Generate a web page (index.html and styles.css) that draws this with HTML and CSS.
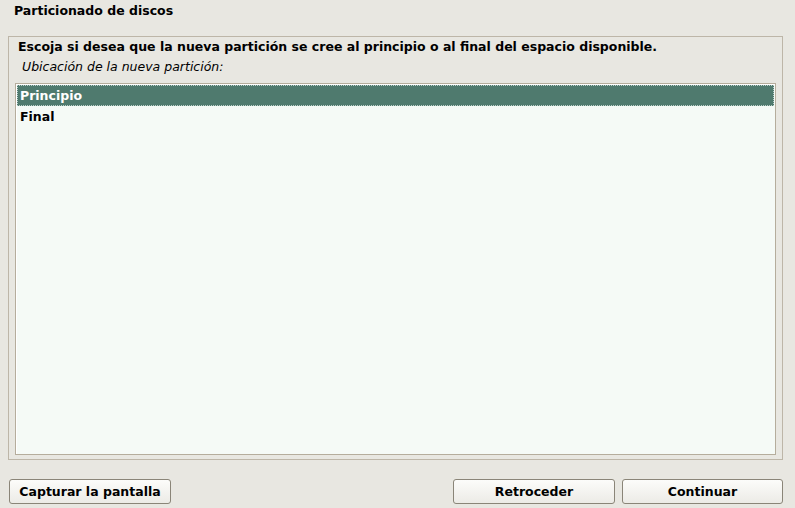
FILE: index.html
```html
<!DOCTYPE html>
<html>
<head>
<meta charset="utf-8">
<link rel="stylesheet" href="styles.css">
</head>
<body>
<div class="app">
  <div class="title">Particionado de discos</div>
  <div class="frame">
    <div class="question">Escoja si desea que la nueva partición se cree al principio o al final del espacio disponible.</div>
    <div class="label">Ubicación de la nueva partición:</div>
    <div class="list">
      <div class="row selected">Principio</div>
      <div class="row">Final</div>
    </div>
  </div>
  <div class="buttons">
    <button class="btn btn-capture">Capturar la pantalla</button>
    <div class="spacer"></div>
    <button class="btn btn-back">Retroceder</button>
    <button class="btn btn-next">Continuar</button>
  </div>
</div>
</body>
</html>
```
FILE: styles.css
```css
html, body {
  margin: 0;
  padding: 0;
  background: #e8e7e1;
}
.app {
  width: 795px;
  height: 508px;
  box-sizing: border-box;
  font-family: "DejaVu Sans", sans-serif;
  font-size: 12.5px;
  color: #000;
  display: flex;
  flex-direction: column;
  padding: 0 12px 0 8px;
}
.title {
  font-weight: bold;
  padding: 3px 0 0 6px;
  height: 36px;
  box-sizing: border-box;
}
.frame {
  border: 1px solid #bdb6a8;
  height: 424px;
  box-sizing: border-box;
  padding: 2px 6px 4px 6px;
  display: flex;
  flex-direction: column;
}
.question {
  font-weight: bold;
  padding: 0 0 0 3px;
  line-height: 16px;
}
.label {
  font-style: italic;
  padding-left: 7px;
  line-height: 18px;
  margin: 3px 0 7px 0;
}
.list {
  flex: 1;
  background: #f5faf6;
  border: 1px solid #b5ad9c;
  box-shadow: inset 1px 1px 0 #fff;
  padding: 1px;
}
.row {
  font-weight: bold;
  height: 21px;
  line-height: 21px;
  padding-left: 3px;
  box-sizing: border-box;
}
.row.selected {
  background: #4f7a6e;
  color: #fff;
  outline: 1px dotted #bcd0ca;
  outline-offset: -1px;
}
.buttons {
  display: flex;
  margin-top: 19px;
  padding-left: 1px;
}
.spacer { flex: 1; }
.btn {
  font-family: "DejaVu Sans", sans-serif;
  font-size: 12.5px;
  font-weight: bold;
  color: #000;
  height: 25px;
  width: 162px;
  border: 1px solid #8a8578;
  border-radius: 3px;
  background: linear-gradient(#fcfcfa, #ecebe6);
  padding: 0;
}
.btn-back { margin-right: 7px; width: 162px; }
.btn-next { width: 161px; }
```
